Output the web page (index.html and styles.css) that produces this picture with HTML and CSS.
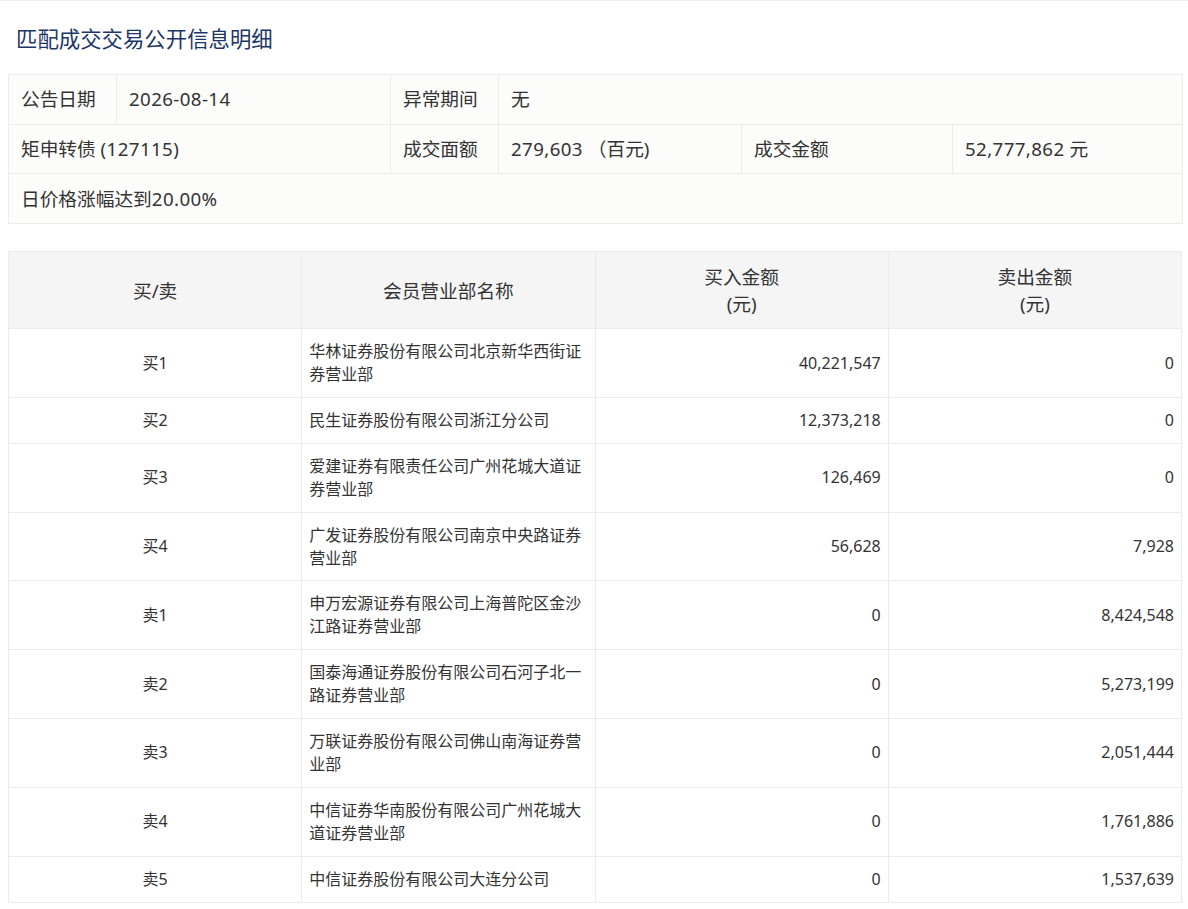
FILE: index.html
```html
<!DOCTYPE html>
<html lang="zh-CN">
<head>
<meta charset="utf-8">
<title>匹配成交交易公开信息明细</title>
<link rel="stylesheet" href="styles.css">
</head>
<body>
<div class="page">
  <h1 class="title">匹配成交交易公开信息明细</h1>

  <table class="info">
    <colgroup>
      <col class="c1"><col class="c2"><col class="c3"><col class="c4"><col class="c5"><col class="c6">
    </colgroup>
    <tr>
      <td>公告日期</td>
      <td><span class="digits">2026-08-14</span></td>
      <td>异常期间</td>
      <td colspan="3">无</td>
    </tr>
    <tr>
      <td colspan="2">矩申转债 <span class="digits">(127115)</span></td>
      <td>成交面额</td>
      <td><span class="digits">279,603</span> （百元)</td>
      <td>成交金额</td>
      <td><span class="digits">52,777,862</span> 元</td>
    </tr>
    <tr>
      <td colspan="6">日价格涨幅达到<span class="digits">20.00%</span></td>
    </tr>
  </table>

  <table class="detail">
    <thead>
      <tr>
        <th>买/卖</th>
        <th>会员营业部名称</th>
        <th>买入金额<br>(元)</th>
        <th>卖出金额<br>(元)</th>
      </tr>
    </thead>
    <tbody>
      <tr><td class="side">买1</td><td class="name">华林证券股份有限公司北京新华西街证券营业部</td><td class="num">40,221,547</td><td class="num">0</td></tr>
      <tr><td class="side">买2</td><td class="name">民生证券股份有限公司浙江分公司</td><td class="num">12,373,218</td><td class="num">0</td></tr>
      <tr><td class="side">买3</td><td class="name">爱建证券有限责任公司广州花城大道证券营业部</td><td class="num">126,469</td><td class="num">0</td></tr>
      <tr><td class="side">买4</td><td class="name">广发证券股份有限公司南京中央路证券营业部</td><td class="num">56,628</td><td class="num">7,928</td></tr>
      <tr><td class="side">卖1</td><td class="name">申万宏源证券有限公司上海普陀区金沙江路证券营业部</td><td class="num">0</td><td class="num">8,424,548</td></tr>
      <tr><td class="side">卖2</td><td class="name">国泰海通证券股份有限公司石河子北一路证券营业部</td><td class="num">0</td><td class="num">5,273,199</td></tr>
      <tr><td class="side">卖3</td><td class="name">万联证券股份有限公司佛山南海证券营业部</td><td class="num">0</td><td class="num">2,051,444</td></tr>
      <tr><td class="side">卖4</td><td class="name">中信证券华南股份有限公司广州花城大道证券营业部</td><td class="num">0</td><td class="num">1,761,886</td></tr>
      <tr><td class="side">卖5</td><td class="name">中信证券股份有限公司大连分公司</td><td class="num">0</td><td class="num">1,537,639</td></tr>
    </tbody>
  </table>
</div>
</body>
</html>
```
FILE: styles.css
```css
html, body {
  margin: 0;
  padding: 0;
  background: #ffffff;
}

body {
  font-family: "Noto Sans", "Noto Sans CJK SC", sans-serif;
  color: #333333;
}

.page {
  border-top: 1px solid #f0f0f0;
  padding: 0 6px 0 8px;
}

.title {
  margin: 0;
  padding: 23px 0 0 8px;
  height: 50px;
  font-size: 21.4px;
  line-height: 30px;
  font-weight: normal;
  color: #1d3567;
}

.info {
  width: 1174px;
  border-collapse: collapse;
  table-layout: fixed;
  background: #fcfcfa;
  font-size: 18.7px;
}

.info .c1 { width: 108px; }
.info .c2 { width: 274px; }
.info .c3 { width: 108px; }
.info .c4 { width: 243px; }
.info .c5 { width: 211px; }
.info .c6 { width: 230px; }

.info td {
  height: 48.7px;
  padding: 0 0 0 12px;
  border: 1px solid #ebebeb;
  line-height: 24px;
  white-space: nowrap;
  vertical-align: middle;
}

.info .digits {
  letter-spacing: 0.4px;
}

.detail {
  width: 1174px;
  margin-top: 27px;
  border-collapse: collapse;
  table-layout: fixed;
  font-size: 16px;
}

.detail th {
  width: 25%;
  background: #f5f5f5;
  font-weight: normal;
  font-size: 18.7px;
  line-height: 27px;
  padding: 11px 7px;
  height: 54px;
  border: 1px solid #ebebeb;
  text-align: center;
  vertical-align: middle;
  color: #333333;
}

.detail td {
  border: 1px solid #ebebeb;
  padding: 11px 7px;
  line-height: 22.9px;
  vertical-align: middle;
  background: #ffffff;
}

.detail .side {
  text-align: center;
}

.detail .name {
  text-align: left;
}

.detail .num {
  text-align: right;
}
```
